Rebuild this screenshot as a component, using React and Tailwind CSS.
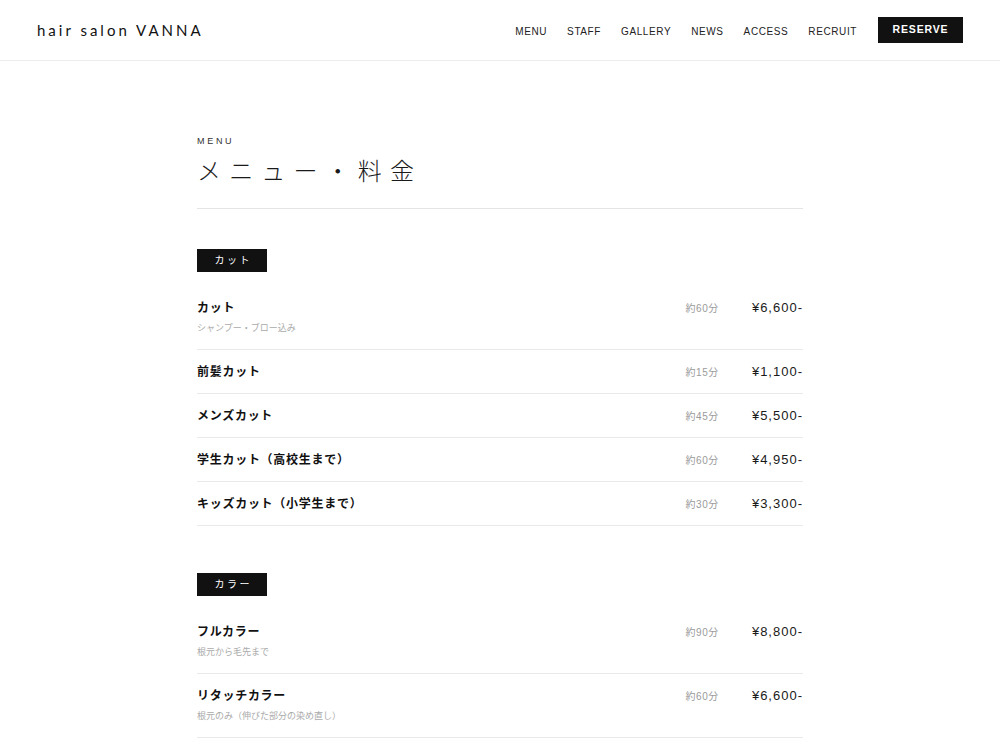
import React from "react";

const sans = { fontFamily: '"Liberation Sans", "Noto Sans CJK JP", sans-serif' };

const navItems = ["MENU", "STAFF", "GALLERY", "NEWS", "ACCESS", "RECRUIT"];

const sections = [
  {
    title: "カット",
    items: [
      { name: "カット", desc: "シャンプー・ブロー込み", time: "約60分", price: "¥6,600-" },
      { name: "前髪カット", time: "約15分", price: "¥1,100-" },
      { name: "メンズカット", time: "約45分", price: "¥5,500-" },
      { name: "学生カット（高校生まで）", time: "約60分", price: "¥4,950-" },
      { name: "キッズカット（小学生まで）", time: "約30分", price: "¥3,300-" },
    ],
  },
  {
    title: "カラー",
    items: [
      { name: "フルカラー", desc: "根元から毛先まで", time: "約90分", price: "¥8,800-" },
      { name: "リタッチカラー", desc: "根元のみ（伸びた部分の染め直し）", time: "約60分", price: "¥6,600-" },
    ],
  },
];

const MenuRow = ({ item }) => (
  <div className="flex items-start justify-between border-b border-[#e9e9e9] pt-[14px] pb-[13px]">
    <div>
      <div className="text-[12px] leading-[16px] font-bold tracking-[0.06em] text-[#111]">
        {item.name}
      </div>
      {item.desc && (
        <div className="mt-[5px] mb-[1px] text-[9px] leading-[14px] text-[#aaa]">{item.desc}</div>
      )}
    </div>
    <div className="flex items-center gap-[33px] h-[16px]">
      <span className="text-[10px] tracking-[0.06em] text-[#9a9a9a]">{item.time}</span>
      <span className="text-[13px] tracking-[1px] text-[#1a1a1a]">{item.price}</span>
    </div>
  </div>
);

export default function App() {
  return (
    <div className="min-h-screen bg-white text-[#111]" style={sans}>
      {/* header */}
      <header className="h-[61px] flex items-center justify-between px-[37px] border-b border-[#ececec]">
        <div
          className="text-[15px] tracking-[0.2em] text-[#111]"
          style={{ fontFamily: '"Lato", "Liberation Sans", sans-serif' }}
        >
          hair salon VANNA
        </div>
        <nav className="flex items-center">
          <div className="flex items-center gap-[20px] text-[10px] tracking-[0.06em] text-[#222] pt-[2px]">
            {navItems.map((n) => (
              <a key={n} href="#">{n}</a>
            ))}
          </div>
          <a
            href="#"
            className="ml-[21px] w-[85px] h-[26px] flex items-center justify-center bg-[#111] text-white text-[10.5px] font-bold tracking-[0.08em]"
          >
            RESERVE
          </a>
        </nav>
      </header>

      {/* content */}
      <main className="w-[606px] mx-auto pt-[74px]">
        <div className="border-b border-[#e4e4e4] pb-[20px]">
          <div className="text-[9px] leading-[12px] tracking-[0.3em] text-[#333]">MENU</div>
          <h1 className="mt-[9px] text-[24px] leading-[32px] tracking-[0.34em] font-light text-[#1a1a1a]">
            メニュー・料金
          </h1>
        </div>

        {sections.map((s, i) => (
          <section key={s.title} className={i === 0 ? "mt-[40px]" : "mt-[47px]"}>
            <div className="w-[70px] h-[23px] flex items-center justify-center bg-[#111] text-white text-[10px] tracking-[0.25em] pl-[0.25em] mb-[14px]">
              {s.title}
            </div>
            {s.items.map((item) => (
              <MenuRow key={item.name} item={item} />
            ))}
          </section>
        ))}
      </main>
    </div>
  );
}
